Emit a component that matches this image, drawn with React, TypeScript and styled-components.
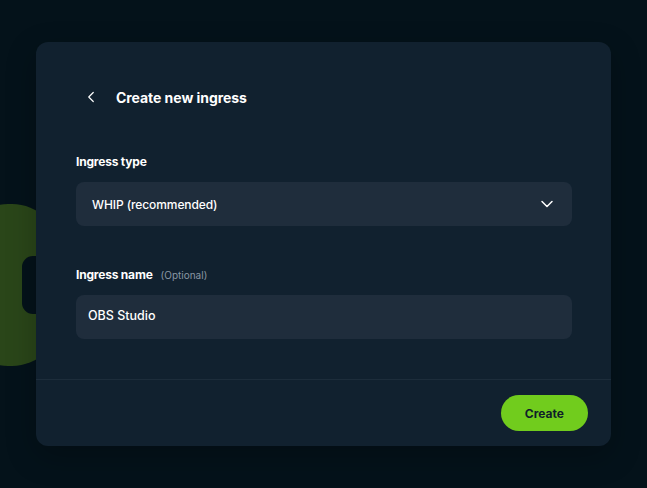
import styled, { createGlobalStyle } from 'styled-components';
import { ChevronLeft, ChevronDown } from 'lucide-react';

const GlobalStyle = createGlobalStyle`
  html, body {
    margin: 0;
    padding: 0;
    background: #04121a;
    font-family: Inter, 'Noto Sans', sans-serif;
    -webkit-font-smoothing: antialiased;
  }
`;

export default function App() {
  return (
    <Page>
      <GlobalStyle />
      <Backdrop width="60" height="162" viewBox="0 0 60 162">
        <rect x="-40" y="0" width="100" height="162" rx="48" fill="#2a4619" />
        <rect x="22" y="52" width="40" height="58" rx="11" fill="#04121a" />
      </Backdrop>
      <Modal>
        <Body>
          <Header>
            <BackButton aria-label="Back">
              <ChevronLeft size={18} strokeWidth={1.6} />
            </BackButton>
            <Title>Create new ingress</Title>
          </Header>

          <Field>
            <Label>Ingress type</Label>
            <Select>
              <span>WHIP (recommended)</span>
              <ChevronDown size={20} strokeWidth={1.8} />
            </Select>
          </Field>

          <Field>
            <Label>
              Ingress name <Hint>(Optional)</Hint>
            </Label>
            <Input defaultValue="OBS Studio" />
          </Field>
        </Body>
        <Footer>
          <PrimaryButton>Create</PrimaryButton>
        </Footer>
      </Modal>
    </Page>
  );
}

const Page = styled.div`
  position: relative;
  width: 647px;
  height: 488px;
  overflow: hidden;
  background: #04121a;
  padding: 42px 36px 0 36px;
  box-sizing: border-box;
`;

const Backdrop = styled.svg`
  position: absolute;
  left: 0;
  top: 204px;
`;

const Modal = styled.div`
  position: relative;
  width: 575px;
  height: 404px;
  background: #11212f;
  border-radius: 12px;
  display: flex;
  flex-direction: column;
  box-shadow: 0 10px 30px rgba(0, 0, 0, 0.25);
`;

const Body = styled.div`
  padding: 44px 39px 40px 40px;
  display: flex;
  flex-direction: column;
  border-bottom: 1px solid #1d2d3b;
`;

const Header = styled.div`
  display: flex;
  align-items: center;
  height: 22px;
  margin-bottom: 47px;
`;

const BackButton = styled.button`
  background: none;
  border: none;
  padding: 0;
  margin-left: 6px;
  width: 34px;
  color: #ffffff;
  display: flex;
  align-items: center;
  cursor: pointer;
`;

const Title = styled.h1`
  margin: 0;
  font-size: 14px;
  font-weight: 700;
  color: #ffffff;
  letter-spacing: -0.05px;
`;

const Field = styled.div`
  display: flex;
  flex-direction: column;
  & + & {
    margin-top: 42px;
  }
`;

const Label = styled.label`
  display: flex;
  align-items: baseline;
  gap: 8px;
  height: 14px;
  line-height: 14px;
  margin-bottom: 13px;
  font-size: 12px;
  font-weight: 700;
  color: #ffffff;
  letter-spacing: -0.2px;
`;

const Hint = styled.span`
  font-size: 10px;
  font-weight: 400;
  color: #8a96a3;
  letter-spacing: 0;
`;

const Select = styled.div`
  height: 44px;
  border-radius: 8px;
  background: #1f2d3c;
  display: flex;
  align-items: center;
  justify-content: space-between;
  padding: 0 15px 0 16px;
  font-size: 12px;
  font-weight: 500;
  color: #ffffff;
  letter-spacing: -0.1px;
  box-sizing: border-box;
`;

const Input = styled.input`
  height: 44px;
  border-radius: 8px;
  background: #1f2d3c;
  border: none;
  outline: none;
  padding: 0 12px 3px;
  font-family: inherit;
  font-size: 12.5px;
  font-weight: 500;
  color: #ffffff;
  box-sizing: border-box;
`;

const Footer = styled.div`
  flex: 1;
  display: flex;
  align-items: center;
  justify-content: flex-end;
  padding: 0 23px;
`;

const PrimaryButton = styled.button`
  height: 36px;
  padding: 0 24px;
  border: none;
  border-radius: 18px;
  background: #71cc1d;
  color: #0f1e29;
  font-family: inherit;
  font-size: 12px;
  font-weight: 700;
  cursor: pointer;
`;
